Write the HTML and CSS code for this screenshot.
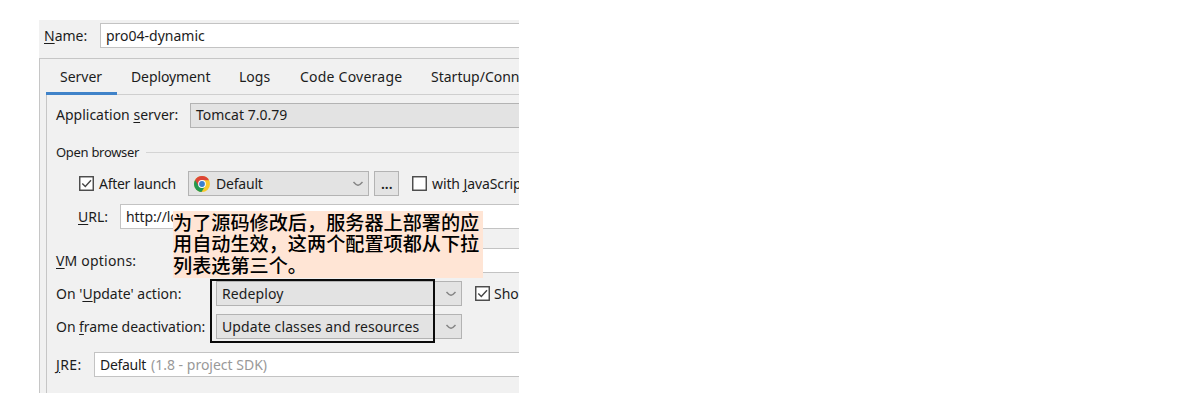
FILE: index.html
```
<!DOCTYPE html>
<html lang="zh-CN">
<head>
<meta charset="utf-8">
<title>Run configuration</title>
<link rel="stylesheet" href="styles.css">
</head>
<body>
<main class="dialog">
  <div class="name-row">
    <label class="name-label"><u>N</u>ame:</label>
    <div class="field name-field"><span class="t-name">pro04-dynamic</span></div>
  </div>
  <section class="tabs-box">
    <nav class="tabs">
      <span class="tab tab-active"><span class="t-server">Server</span></span>
      <span class="tab tab-deploy">Deployment</span>
      <span class="tab tab-logs">Logs</span>
      <span class="tab tab-coverage">Code Coverage</span>
      <span class="tab tab-startup">Startup/Conne</span>
    </nav>
    <div class="content">
      <div class="row row-server">
        <label class="label-server">Application <u>s</u>erver:</label>
        <div class="combo grow"><span class="t-tomcat">Tomcat 7.0.79</span></div>
      </div>
      <div class="row row-group"><span class="label-group">Open browser</span><i class="rule"></i></div>
      <div class="row row-launch">
        <svg class="check" viewBox="0 0 15 15"><rect x=".75" y=".75" width="13.5" height="13.5"/><path d="M3.3 7.5 6.3 10.5 12 4.2"/></svg>
        <label class="label-launch">After launch</label>
        <div class="combo browser">
          <svg class="chrome" viewBox="0 0 16 16"><circle cx="8" cy="8" r="8" fill="#f8c82c"/><path d="M1.1 4A8 8 0 0 0 7.5 16L11.2 10 8 8Z" fill="#24984f"/><path d="M1.1 4A8 8 0 0 1 15 4.2H8L4.6 10Z" fill="#dc4437"/><circle cx="8" cy="8" r="3.9" fill="#fff"/><circle cx="8" cy="8" r="2.9" fill="#3b7fd0"/></svg>
          <span class="t-browser">Default</span>
          <svg class="chevron" viewBox="0 0 12 8"><path d="M1.5 2Q4 5 6 5.2Q8 5 10.5 2"/></svg>
        </div>
        <div class="combo more">...</div>
        <svg class="check js-check" viewBox="0 0 15 15"><rect x=".75" y=".75" width="13.5" height="13.5"/></svg>
        <label class="label-js">with <u>J</u>avaScrip</label>
      </div>
      <div class="row row-url">
        <label class="label-url"><u>U</u>RL:</label>
        <div class="field grow"><span class="t-url">http://localhost:8080/pro04/</span></div>
      </div>
      <div class="row row-vm">
        <label class="label-vm"><u>V</u>M options:</label>
        <div class="field grow"></div>
      </div>
      <div class="row row-update">
        <label class="label-update">On '<u>U</u>pdate' action:</label>
        <div class="combo action"><span class="t-redeploy">Redeploy</span>
          <svg class="chevron" viewBox="0 0 12 8"><path d="M1.5 2Q4 5 6 5.2Q8 5 10.5 2"/></svg></div>
        <svg class="check show-check" viewBox="0 0 15 15"><rect x=".75" y=".75" width="13.5" height="13.5"/><path d="M3.3 7.5 6.3 10.5 12 4.2"/></svg>
        <label class="label-show">Sho</label>
      </div>
      <div class="row row-frame">
        <label class="label-frame">On <u>f</u>rame deactivation:</label>
        <div class="combo action"><span class="t-classes">Update classes and resources</span>
          <svg class="chevron" viewBox="0 0 12 8"><path d="M1.5 2Q4 5 6 5.2Q8 5 10.5 2"/></svg></div>
      </div>
      <div class="row row-jre">
        <label class="label-jre"><u>J</u>RE:</label>
        <div class="field jre grow"><span class="t-default">Default</span><span class="t-sdk">(1.8 - project SDK)</span></div>
      </div>
    </div>
  </section>
  <div class="highlight"></div>
  <aside class="note">为了源码修改后，服务器上部署的应<br>用自动生效，这两个配置项都从下拉<br>列表选第三个。</aside>
</main>
</body>
</html>
```
FILE: styles.css
```
* { box-sizing: border-box; }
body {
  margin: 0;
  padding: 20px 0 0 39px;
  background: #fff;
  color: #1c1c1c;
  font: 14px/20px "Noto Sans", "Open Sans", sans-serif;
}
u { text-underline-offset: 2px; text-decoration-thickness: 1px; }
.dialog {
  position: relative;
  width: 480px;
  height: 373px;
  overflow: hidden;
  background: #f1f1f1;
  white-space: nowrap;
}
.name-row { display: flex; align-items: center; height: 38px; padding: 3px 0 10px 5px; }
.name-label { flex: none; width: 56px; }
.field {
  display: flex;
  align-items: center;
  height: 25px;
  padding-left: 5px;
  border: 1px solid #c3c3c3;
  border-right: 0;
  background: #fff;
  overflow: hidden;
}
.name-field { flex: 1; }
.grow { flex: 1; min-width: 0; }
.tabs-box { height: 335px; padding-left: 6px; border: solid #c6c6c6; border-width: 1px 0 0 1px; }
.tabs { display: flex; height: 36px; border-bottom: 1px solid #cfcfcf; }
.tab { flex: none; height: 36px; padding-top: 8px; }
.tab-active { width: 71px; padding-left: 14px; border-bottom: 3px solid #4083c9; }
.tab-deploy { width: 122px; padding-left: 14px; letter-spacing: -0.1px; }
.tab-logs { width: 61px; }
.tab-coverage { width: 131px; letter-spacing: 0.23px; }
.content { height: 298px; padding-left: 9px; border-left: 1px solid #c6c6c6; }
.row { display: flex; align-items: center; height: 25px; }
.row > label { flex: none; }
.combo {
  display: flex;
  align-items: center;
  height: 25px;
  padding-left: 5px;
  border: 1px solid #b3b3b3;
  background: #e3e3e3;
}
.row-server { height: 40px; }
.row-server .combo { border-right: 0; }
.label-server { width: 134px; }
.row-group { height: 24px; margin-top: 5px; font-size: 13px; }
.label-group { width: 90px; letter-spacing: -0.3px; }
.rule { flex: 1; height: 1px; background: #d4d4d4; }
.row-launch { margin-top: 7px; padding-left: 23px; }
.check { flex: none; width: 15px; height: 15px; fill: #fff; stroke: #454545; stroke-width: 1.4; }
.check path { fill: none; }
.label-launch { width: 94px; padding-left: 5px; letter-spacing: -0.28px; }
.browser { flex: none; width: 181px; }
.chrome { width: 16px; height: 16px; margin-right: 6px; }
.t-browser { letter-spacing: -0.2px; }
.chevron { flex: none; width: 12px; height: 8px; margin: 0 4px 0 auto; fill: none; stroke: #858585; stroke-width: 1.4; }
.more { flex: none; width: 25px; margin-left: 5px; padding-left: 6px; font-weight: 600; }
.js-check { margin-left: 13px; }
.label-js { margin-left: 5px; letter-spacing: -0.1px; }
.row-url { margin-top: 8px; padding-left: 22px; }
.label-url { width: 42px; }
.t-url { letter-spacing: -0.1px; }
.row-vm { margin-top: 19px; }
.label-vm { width: 160px; letter-spacing: 0.2px; }
.row-update { margin-top: 8px; }
.label-update, .label-frame { width: 160px; }
.label-frame { letter-spacing: -0.05px; }
.action { flex: none; width: 246px; }
.t-redeploy, .t-classes { letter-spacing: 0.1px; }
.show-check { margin-left: 13px; }
.label-show { margin-left: 4px; }
.row-frame { margin-top: 8px; }
.row-jre { margin-top: 13px; }
.label-jre { width: 38px; letter-spacing: 0.4px; }
.t-default { letter-spacing: -0.3px; }
.t-sdk { margin-left: 5px; color: #999; }
.highlight {
  position: absolute;
  left: 171px;
  top: 259px;
  width: 225px;
  height: 64px;
  border: 2px solid #0b0b0b;
}
.note {
  position: absolute;
  left: 134px;
  top: 191px;
  width: 310px;
  height: 67px;
  padding-top: 1px;
  background: #ffe5d5;
  color: #000;
  font: 500 19.15px/21.4px "Noto Sans CJK SC", sans-serif;
}
```
